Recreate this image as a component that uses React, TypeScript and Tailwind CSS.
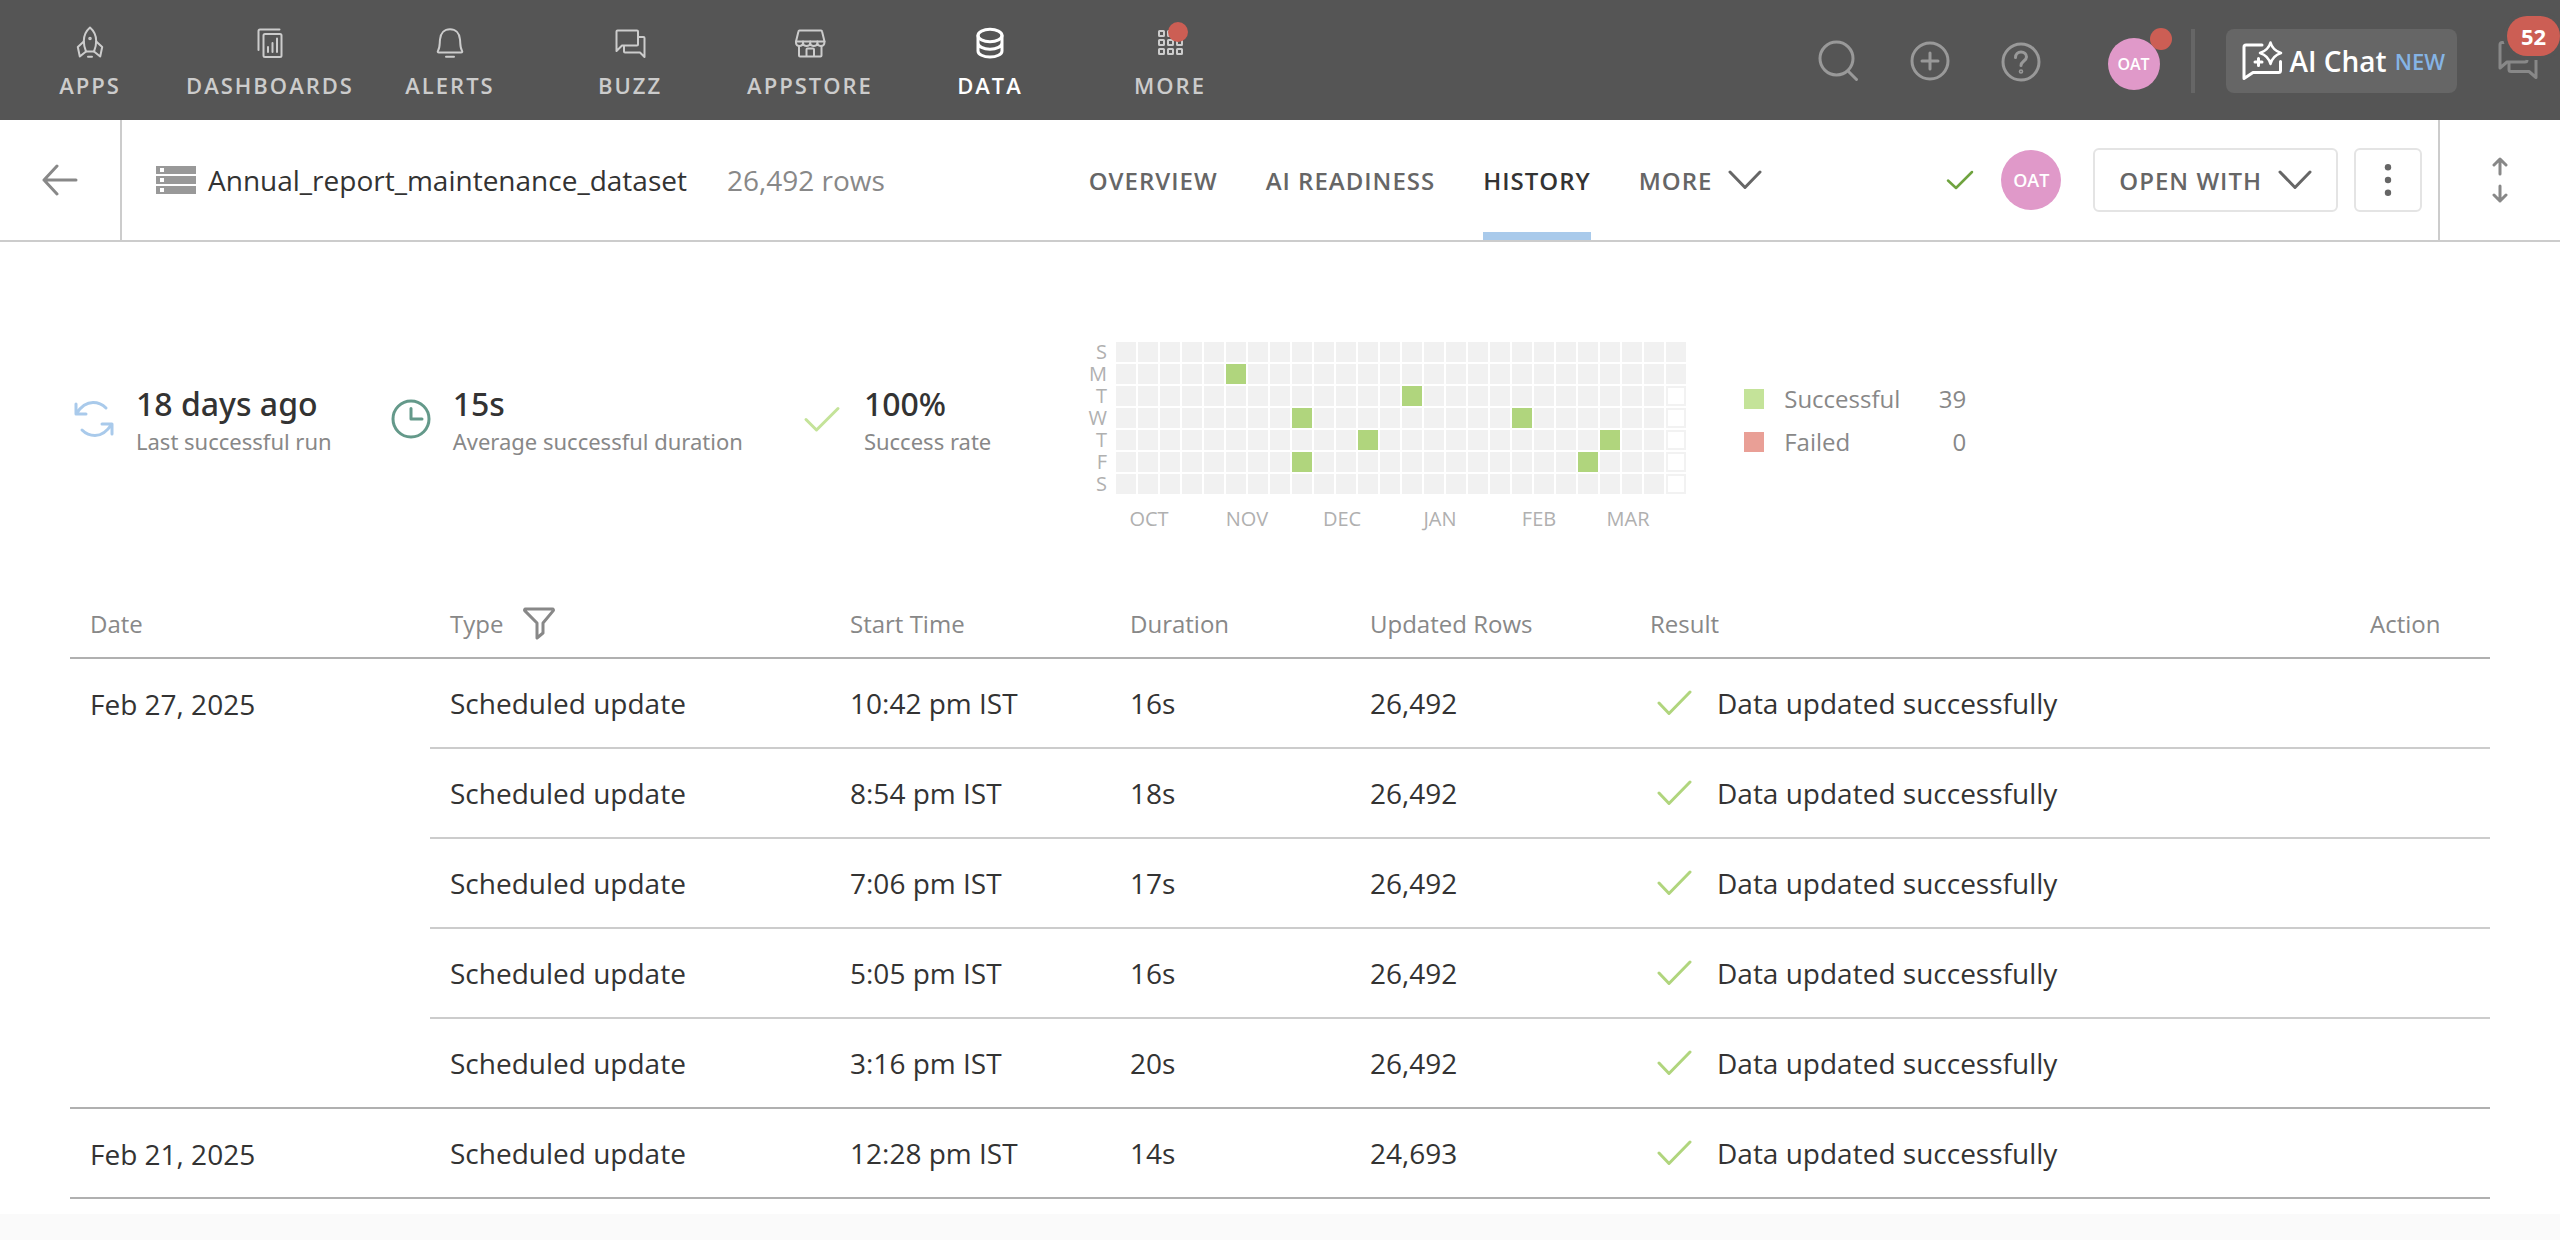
import type { ReactNode } from "react";

const OPEN = "font-['Open_Sans','Noto_Sans',sans-serif]";
const NOTO = "font-['Noto_Sans','Open_Sans',sans-serif]";

function Icon({ size = 32, width = 2, children }: { size?: number; width?: number; children: ReactNode }) {
  return (
    <svg
      width={size}
      height={size}
      viewBox={`0 0 ${size} ${size}`}
      fill="none"
      stroke="currentColor"
      strokeWidth={width}
      strokeLinecap="round"
      strokeLinejoin="round"
      className="block shrink-0 overflow-visible"
      aria-hidden="true"
    >
      {children}
    </svg>
  );
}

const RocketIcon = () => (
  <Icon>
    <path d="M16 1.500c-4 3.500-6.200 8.500-6.200 13.500 0 4 .8 7.200 2.200 10.500h8c1.400-3.300 2.200-6.500 2.200-10.500 0-5-2.200-10-6.200-13.500z" />
    <path d="M9.800 15.500l-6 5.500 2 9.500 6.200-5M22.200 15.500l6 5.500-2 9.500-6.200-5M14 30.800h4" />
    <circle cx="16" cy="12.500" r="0.800" />
  </Icon>
);

const DashboardIcon = () => (
  <Icon>
    <path d="M4.500 24V5a1.500 1.500 0 0 1 1.500-1.500h19.500" />
    <rect x="9.500" y="8" width="18" height="23" rx="1.500" />
    <path d="M14 21v5M18.500 17v9M23 12.500v13.500" />
  </Icon>
);

const BellIcon = () => (
  <Icon>
    <path d="M5 26.500c-1.200 0-1.600-.8-1-1.800 2-3 1.500-6 2-11.200C6.500 7 10.500 3.300 16 3.300s9.500 3.700 10 10.200c.5 5.200 0 8.200 2 11.200.6 1 .2 1.800-1 1.800zM12 30.800h8" />
  </Icon>
);

const BuzzIcon = () => (
  <Icon>
    <path d="M2.500 25V5.500a1 1 0 0 1 1-1h19.500a1 1 0 0 1 1 1v13a1 1 0 0 1-1 1H8z" />
    <path d="M24.500 11H29.500a1 1 0 0 1 1 1v19l-4.500-4.500H11a1 1 0 0 1-1-1v-5.500" />
  </Icon>
);

const StoreIcon = () => (
  <Icon>
    <path d="M5.500 4.500h21.500a1 1 0 0 1 1 .8l2.500 10.200h-28.500l2.500-10.200a1 1 0 0 1 1-.8z" />
    <path d="M2 15.500v1.500a3.500 3 0 0 0 7 0v-1.500 1.500a3.500 3 0 0 0 7.200 0v-1.500 1.500a3.500 3 0 0 0 7.200 0v-1.500 1.500a3.500 3 0 0 0 7 0v-1.500" />
    <path d="M5 20v9.500a1 1 0 0 0 1 1h20.500a1 1 0 0 0 1-1v-9.500M12.500 30v-6.500a1 1 0 0 1 1-1h5.500a1 1 0 0 1 1 1v6.500" />
  </Icon>
);

const DatabaseIcon = () => (
  <Icon width={3}>
    <ellipse cx="16" cy="9.500" rx="12" ry="6.200" />
    <path d="M4 9.500v15.500c0 3.400 5.400 6 12 6s12-2.600 12-6v-15.500M4 17c0 3.400 5.400 6.200 12 6.200s12-2.800 12-6.200" />
  </Icon>
);

const GridIcon = () => (
  <Icon>
    {[5, 14, 23].map((y) =>
      [5, 14, 23].map((x) => <rect key={`${x}-${y}`} x={x} y={y} width="5" height="5" rx="0.5" />),
    )}
  </Icon>
);

const navItems: { label: string; icon: ReactNode; active?: boolean; dot?: boolean }[] = [
  { label: "APPS", icon: <RocketIcon /> },
  { label: "DASHBOARDS", icon: <DashboardIcon /> },
  { label: "ALERTS", icon: <BellIcon /> },
  { label: "BUZZ", icon: <BuzzIcon /> },
  { label: "APPSTORE", icon: <StoreIcon /> },
  { label: "DATA", icon: <DatabaseIcon />, active: true },
  { label: "MORE", icon: <GridIcon />, dot: true },
];

function TopBar() {
  return (
    <header className="flex h-[120px] items-center justify-between bg-[#555] pr-[22px]">
      <nav aria-label="Main" className="flex">
        {navItems.map((n) => (
          <a
            key={n.label}
            href="#"
            className={`flex h-[120px] w-[180px] flex-col items-center gap-3 pt-[26px] text-[22px] leading-[30px] font-semibold tracking-[2px] ${
              n.active ? "text-white" : "text-[#ccc]"
            }`}
          >
            <span className="relative">
              {n.icon}
              {n.dot && <span className="absolute -top-1 -right-0.5 size-5 rounded-full bg-[#cc5e54]" />}
            </span>
            <span>{n.label}</span>
          </a>
        ))}
      </nav>

      <div className="flex items-center pt-0.5 text-[#999]">
        <button type="button" aria-label="Search" className="mr-[52px]">
          <Icon size={40} width={3}>
            <circle cx="18.500" cy="17.500" r="16.500" />
            <path d="M30 30l8.500 8.500" />
          </Icon>
        </button>
        <button type="button" aria-label="Create" className="mr-[51px]">
          <Icon size={40} width={3}>
            <circle cx="20" cy="20" r="18" />
            <path d="M20 12v16M12 20h16" />
          </Icon>
        </button>
        <button type="button" aria-label="Help" className="mr-[67px]">
          <Icon size={40} width={3}>
            <circle cx="20" cy="21" r="18" />
            <path d="M14.500 16.500c0-3.200 2.300-5.500 5.500-5.500s5.500 2.200 5.500 5c0 3.800-5.500 4.300-5.500 8.500" />
            <circle cx="20" cy="30.500" r="0.800" />
          </Icon>
        </button>
        <button type="button" aria-label="Profile" className="relative mr-[31px] pt-1.5">
          <span className="flex size-[52px] items-center justify-center rounded-full bg-[#e099c9] text-base font-semibold text-white">
            OAT
          </span>
          <span className="absolute -top-1 -right-3 size-[22px] rounded-full bg-[#cc5e54]" />
        </button>
        <span className="mr-[31px] h-16 w-1 bg-[#666]" />
        <button type="button" className="mr-[41px] flex h-16 items-center rounded-lg bg-[#666] px-4 pr-3 text-white">
          <Icon size={40} width={3}>
            <path d="M20 4H4a2 2 0 0 0-2 2v31.500l9-6h25.500a2 2 0 0 0 2-2V20.500" />
            <path
              strokeWidth="2.500"
              d="M28.500 1.500c1.500 5.500 4.500 8.500 10.500 10.500-6 2-9 5-10.500 11-1.500-6-4.500-9-10.500-11 6-2 9-5 10.500-10.500z"
            />
            <path d="M16.500 17.500v7M13 21h7" />
          </Icon>
          <span className="ml-2 text-[28px] leading-[38px] font-semibold">AI Chat</span>
          <span className="ml-2 text-[22px] leading-[30px] font-semibold text-[#85b4e5]">NEW</span>
        </button>
        <button type="button" aria-label="Conversations" className="relative text-[#888]">
          <Icon size={40} width={3}>
            <path d="M5 1.500H4a2 2 0 0 0-2 2v23.500l7-6h18a2 2 0 0 0 2-2V3.500a2 2 0 0 0-2-2z" />
            <path d="M38 9v27.500l-7-6H13a2 2 0 0 1-2-2V22" />
          </Icon>
          <span className="absolute -top-[25px] left-[9px] flex h-10 w-[53px] items-center justify-center rounded-full bg-[#cc5e54] text-[22px] font-bold text-white ring-4 ring-[#555]">
            52
          </span>
        </button>
      </div>
    </header>
  );
}

const Chevron = () => (
  <svg width="34" height="20" viewBox="0 0 34 20" fill="none" stroke="currentColor" strokeWidth="3" strokeLinecap="round" strokeLinejoin="round" aria-hidden="true">
    <path d="M2 2l15 15.500L32 2" />
  </svg>
);

function DatasetBar() {
  const tab = "flex h-full items-center";
  return (
    <div className="flex h-[122px] items-stretch border-b-2 border-[#ccc]">
      <button type="button" aria-label="Back" className="flex w-[122px] shrink-0 items-center justify-center border-r-2 border-[#ccc] text-[#888]">
        <svg width="36" height="32" viewBox="0 0 36 32" fill="none" stroke="currentColor" strokeWidth="3" strokeLinecap="round" strokeLinejoin="round" aria-hidden="true">
          <path d="M15 2L2 16l13 14M2 16h32" />
        </svg>
      </button>

      <div className="flex flex-1 items-center justify-between pr-4 pl-[34px]">
        <div className="flex items-center text-[28px] leading-[38px]">
          <svg width="40" height="28" viewBox="0 0 40 28" aria-hidden="true">
            {[0, 10, 20].map((y) => (
              <g key={y}>
                <rect y={y} width="40" height="8" fill="#999" />
                <rect x="4" y={y + 2} width="4" height="4" fill="#fff" />
              </g>
            ))}
          </svg>
          <h1 className="ml-3 text-[#333]">Annual_report_maintenance_dataset</h1>
          <span className="ml-10 text-[#888]">26,492 rows</span>
        </div>

        <nav aria-label="Dataset" className="flex h-full gap-12 pl-5 text-2xl leading-[33px] font-semibold tracking-[1px] text-[#666]">
          <a href="#" className={tab}>OVERVIEW</a>
          <a href="#" className={tab}>AI READINESS</a>
          <a href="#" aria-current="page" className="flex h-full items-center border-y-8 border-t-transparent border-b-[#a9caeb] text-[#333]">
            HISTORY
          </a>
          <button type="button" className="flex h-full items-center gap-4 tracking-[1px]">
            MORE <Chevron />
          </button>
        </nav>

        <div className="flex items-center">
          <svg width="28" height="20" viewBox="0 0 28 20" fill="none" stroke="#6fa33f" strokeWidth="2.5" strokeLinecap="round" strokeLinejoin="round" role="img" aria-label="Up to date">
            <path d="M2 10.500l8 7.500L26 2" />
          </svg>
          <span className="mr-8 ml-[27px] flex size-[60px] items-center justify-center rounded-full bg-[#e099c9] text-lg font-semibold text-white">
            OAT
          </span>
          <button type="button" className="mr-4 flex h-16 items-center gap-4 rounded-md border-2 border-[#e4e4e4] px-6 text-2xl leading-[33px] font-semibold tracking-[1px] text-[#666]">
            OPEN WITH <Chevron />
          </button>
          <button type="button" aria-label="More options" className="flex h-16 w-[68px] items-center justify-center rounded-md border-2 border-[#e4e4e4] text-[#666]">
            <svg width="8" height="32" viewBox="0 0 8 32" fill="currentColor" aria-hidden="true">
              <circle cx="4" cy="3.200" r="3.200" />
              <circle cx="4" cy="16" r="3.200" />
              <circle cx="4" cy="28.800" r="3.200" />
            </svg>
          </button>
        </div>
      </div>

      <button type="button" aria-label="Expand header" className="flex w-[122px] shrink-0 items-center justify-center border-l-2 border-[#ccc] text-[#888]">
        <svg width="16" height="46" viewBox="0 0 16 46" fill="none" stroke="currentColor" strokeWidth="3" strokeLinecap="round" strokeLinejoin="round" aria-hidden="true">
          <path d="M8 17V2M2 8l6-6 6 6M8 29v15M2 38l6 6 6-6" />
        </svg>
      </button>
    </div>
  );
}

const days = ["S", "M", "T", "W", "T", "F", "S"];
const months: [string, number][] = [["OCT", 33], ["NOV", 131], ["DEC", 226], ["JAN", 324], ["FEB", 423], ["MAR", 512]];
const runs = new Set(["5-1", "8-3", "8-5", "11-4", "13-2", "18-3", "21-5", "22-4"]);
const WEEKS = 26;

function RunCalendar() {
  return (
    <svg width="602" height="190" viewBox="-32 0 602 190" role="img" aria-label="Runs by day" className="shrink-0 overflow-visible text-xl">
      {days.map((d, row) => (
        <text key={row} x={-9} y={row * 22 + 17} textAnchor="end" fill="#b0b0b0">
          {d}
        </text>
      ))}
      {Array.from({ length: WEEKS }, (_, col) =>
        days.map((_, row) => {
          const future = col === WEEKS - 1 && row > 1;
          const key = `${col}-${row}`;
          return future ? (
            <rect key={key} x={col * 22 + 1} y={row * 22 + 1} width="18" height="18" fill="#fff" stroke="#f2f2f2" strokeWidth="2" />
          ) : (
            <rect key={key} x={col * 22} y={row * 22} width="20" height="20" fill={runs.has(key) ? "#b0d57d" : "#f1f1f1"} />
          );
        }),
      )}
      {months.map(([m, x]) => (
        <text key={m} x={x} y={184} textAnchor="middle" fill="#b0b0b0">
          {m}
        </text>
      ))}
    </svg>
  );
}

function Stat({ icon, value, label }: { icon: ReactNode; value: string; label: string }) {
  return (
    <div className={`flex items-center gap-[22px] ${NOTO}`}>
      {icon}
      <div>
        <div className="text-[32px] leading-[44px] font-medium text-[#333]">{value}</div>
        <div className="text-[22px] leading-[30px] text-[#888]">{label}</div>
      </div>
    </div>
  );
}

function Summary() {
  return (
    <section aria-label="Summary" className="flex items-start pl-1">
      <div className="flex gap-[59px] pt-10">
        <Stat
          value="18 days ago"
          label="Last successful run"
          icon={
            <span className="text-[#a9caeb]">
              <Icon size={40} width={3}>
                <path d="M2 5v10h10M2.500 14.500C8 6 13 3.500 19 3.500c5 0 9.500 2 13 5.500M38 35V25H28M37.500 25.500C32 34 27 36.500 21 36.500c-5 0-9.500-2-13-5.500" />
              </Icon>
            </span>
          }
        />
        <Stat
          value="15s"
          label="Average successful duration"
          icon={
            <span className="text-[#64998a]">
              <Icon size={40} width={3}>
                <circle cx="20" cy="20" r="18" />
                <path d="M20 9.500V20h11" />
              </Icon>
            </span>
          }
        />
        <Stat
          value="100%"
          label="Success rate"
          icon={
            <span className="text-[#c4e399]">
              <Icon size={40} width={3}>
                <path d="M4 20.500L14.500 31 36 9.500" />
              </Icon>
            </span>
          }
        />
      </div>
      <div className="ml-[93px]">
        <RunCalendar />
      </div>
      <dl className="mt-10 ml-[58px] grid w-[222px] grid-cols-[20px_1fr_auto] items-center gap-x-5 gap-y-2.5 text-2xl leading-[33px] text-[#888]">
        <span className="size-5 bg-[#c4e399]" />
        <dt>Successful</dt>
        <dd className="text-right">39</dd>
        <span className="size-5 bg-[#e99f96]" />
        <dt>Failed</dt>
        <dd className="text-right">0</dd>
      </dl>
    </section>
  );
}

const groups = [
  {
    date: "Feb 27, 2025",
    runs: [
      ["10:42 pm IST", "16s", "26,492"],
      ["8:54 pm IST", "18s", "26,492"],
      ["7:06 pm IST", "17s", "26,492"],
      ["5:05 pm IST", "16s", "26,492"],
      ["3:16 pm IST", "20s", "26,492"],
    ],
  },
  { date: "Feb 21, 2025", runs: [["12:28 pm IST", "14s", "24,693"]] },
];

function HistoryTable() {
  const th = "h-[70px] border-b-2 border-[#b0b0b0] px-5 font-normal";
  return (
    <table className="mt-[57px] w-full table-fixed border-separate border-spacing-0 text-left text-[28px] leading-[38px] text-[#333]">
      <colgroup>
        <col className="w-[360px]" />
        <col className="w-[400px]" />
        <col className="w-[280px]" />
        <col className="w-[240px]" />
        <col className="w-[280px]" />
        <col />
        <col className="w-[140px]" />
      </colgroup>
      <thead className="text-2xl leading-[33px] text-[#888]">
        <tr>
          <th className={th}>Date</th>
          <th className={th}>
            <span className="flex items-center gap-5">
              Type
              <button type="button" aria-label="Filter by type">
                <Icon width={3}>
                  <path d="M2.500 2h27a1 1 0 0 1 .8 1.600L20 16v10l-6 5V16L1.700 3.600A1 1 0 0 1 2.500 2z" />
                </Icon>
              </button>
            </span>
          </th>
          <th className={th}>Start Time</th>
          <th className={th}>Duration</th>
          <th className={th}>Updated Rows</th>
          <th className={th}>Result</th>
          <th className={th}>Action</th>
        </tr>
      </thead>
      {groups.map((g) => (
        <tbody key={g.date}>
          {g.runs.map((r, i) => {
            const td = `h-[90px] border-b-2 px-5 ${i === g.runs.length - 1 ? "border-[#b0b0b0]" : "border-[#ccc]"}`;
            return (
              <tr key={r[0]}>
                {i === 0 && (
                  <th scope="rowgroup" rowSpan={g.runs.length} className="border-b-2 border-[#b0b0b0] px-5 pt-[26px] align-top font-normal">
                    {g.date}
                  </th>
                )}
                <td className={td}>Scheduled update</td>
                <td className={td}>{r[0]}</td>
                <td className={td}>{r[1]}</td>
                <td className={td}>{r[2]}</td>
                <td className={td}>
                  <span className="flex items-center gap-[25px] pl-[7px] text-[#333]">
                    <svg width="35" height="26" viewBox="0 0 35 26" fill="none" stroke="#b0d57d" strokeWidth="3" strokeLinecap="round" strokeLinejoin="round" aria-hidden="true">
                      <path d="M2 13l10 10.500L33 2" />
                    </svg>
                    Data updated successfully
                  </span>
                </td>
                <td className={td} />
              </tr>
            );
          })}
        </tbody>
      ))}
    </table>
  );
}

export default function App() {
  return (
    <div className={`min-h-screen bg-[#fafafa] ${OPEN}`}>
      <TopBar />
      <div className="bg-white">
        <DatasetBar />
        <main className="px-[70px] pt-[100px] pb-[15px]">
          <Summary />
          <HistoryTable />
        </main>
      </div>
    </div>
  );
}
